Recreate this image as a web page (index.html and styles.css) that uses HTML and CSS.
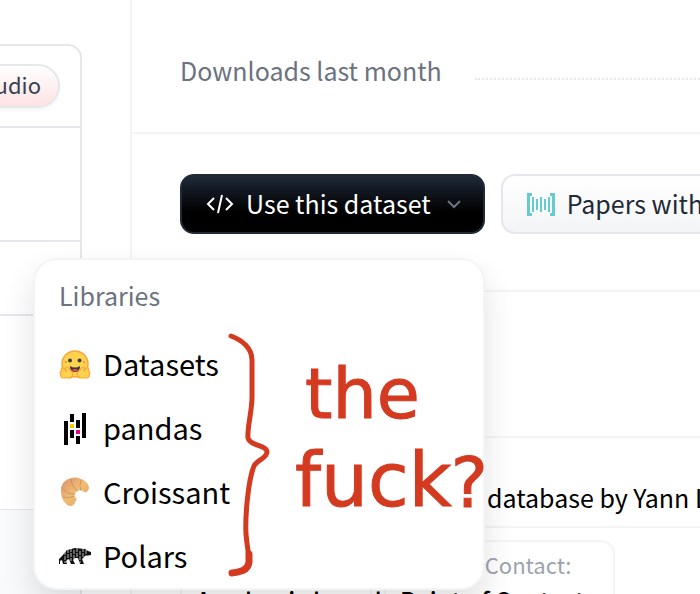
FILE: index.html
```html
<!DOCTYPE html>
<html lang="en">
<head>
<meta charset="utf-8">
<title>Dataset</title>
<link rel="stylesheet" href="styles.css">
</head>
<body>
<div class="page">
  <section class="viewer">
    <div class="viewer-card">
      <header class="viewer-head"><button class="pill" type="button">Studio</button></header>
      <div class="viewer-row tall"></div>
      <div class="viewer-row"></div>
      <div class="viewer-body"></div>
      <div class="viewer-foot"></div>
    </div>
  </section>
  <main class="side">
    <div class="downloads"><span>Downloads last month</span><i class="dots"></i></div>
    <div class="actions">
      <div class="dropdown">
        <button class="btn dark" type="button">
          <svg class="code" viewBox="0 0 28 20" width="28" height="20"><path d="M8 4 2 10l6 6M20 4l6 6-6 6M16 1l-4 18"/></svg>
          <span>Use this dataset</span>
          <svg class="chev" viewBox="0 0 14 10" width="14" height="10"><path d="m1 2 6 6 6-6"/></svg>
        </button>
        <div class="menu">
          <h2>Libraries</h2>
          <ul>
            <li><a href="#datasets">
              <svg viewBox="0 0 32 32" width="32" height="32">
                <circle cx="16" cy="15" r="13" fill="#ffd34d" stroke="#f8a63b" stroke-width="1.5"/>
                <circle cx="7" cy="13" r="1.2" fill="#f89a52"/><circle cx="25" cy="13" r="1.2" fill="#f89a52"/>
                <circle cx="11" cy="11.5" r="2" fill="#3a3b45"/><circle cx="20.5" cy="11.5" r="2" fill="#3a3b45"/>
                <path d="M11 17q5 3 10 0c0 4-2 6-5 6s-5-2-5-6z" fill="#3a3b45"/><path d="M13 21q3-2 6 0-3 3-6 0z" fill="#ef4e4e"/>
                <path d="M3 19c2-1 3 2 4 3 0-2-1-4 1-4s2 3 4 4c3 2 2 7-2 7H5c-3 0-4-2-3-4-2-2 0-3 1-3-1-1-1-2 0-3zM29 19c-2-1-3 2-4 3 0-2 1-4-1-4s-2 3-4 4c-3 2-2 7 2 7h5c3 0 4-2 3-4 2-2 0-3-1-3 1-1 1-2 0-3z" fill="#ffd34d" stroke="#f8a63b" stroke-width="1.2"/>
              </svg><span>Datasets</span></a></li>
            <li><a href="#pandas">
              <svg viewBox="0 0 32 32" width="32" height="32"><path d="M5 8h4v24H5zM11 1h4v8h-4zM11 17h4v8h-4zM17 7h4v8h-4zM17 23h4v8h-4zM23 0h4v25h-4z"/><path fill="#ffca00" d="M11 11h4v4h-4z"/><path fill="#e70488" d="M17 17h4v4h-4z"/></svg>
              <span>pandas</span></a></li>
            <li><a href="#croissant">
              <svg viewBox="0 0 32 32" width="32" height="32">
                <defs><linearGradient id="crust" x1="0" y1="0" x2="1" y2="1"><stop offset="0" stop-color="#dc9168"/><stop offset=".5" stop-color="#eebd74"/><stop offset="1" stop-color="#e3a05c"/></linearGradient></defs>
                <path fill="url(#crust)" d="M2 13C2 6 7 2 13 1c3-1 7 0 9 1 4 1 8 5 8 9-1 4-3 5-5 4-1-2-4-3-6-1-3 1-4 4-3 6 2 1 2 3 0 5 0 2-2 4-5 4-5-1-9-7-9-16z"/>
                <path fill="none" stroke="#c98459" stroke-width=".7" d="M12 2q0 6 6 12M22 3q-2 5 0 11M3 10q4 8 13 7M4 20q6 2 11-1"/>
              </svg><span>Croissant</span></a></li>
            <li><a href="#polars">
              <svg viewBox="0 0 32 32" width="32" height="32">
                <path fill="#111" d="M3 15 8 9l8-2 10 1 3 2 3 1v3l-6 1-3 3 2 5h-4l-2-6h-3l-2 2 2 4h-4l-2-5-3 2 1 3H4l-1-4-2 1v3H0v-5z"/>
                <path fill="none" stroke="#fff" stroke-width=".7" stroke-dasharray="4 1" d="M6 10v12M9 8v12M12 7v13M15 9v9M18 7v14M21 10v12M24 7v10M27 9v6"/>
              </svg><span>Polars</span></a></li>
          </ul>
          <svg class="brace" viewBox="0 0 42 246" width="42" height="246">
            <path d="M3 4C14 8 24 16 24 28V65C24 80 19 95 20 106c2 8 19 7 19 14 0 6-10 8-13 14-6 14-9 52-8 68 1 12 3 20 3 28"/>
            <path class="tail" d="M21 222v8c-1 9-10 10-17 11"/>
          </svg>
          <p class="note"><span>the</span><span class="wide">fuck</span></p>
          <b class="mark">?</b>
        </div>
      </div>
      <button class="btn light" type="button">
        <svg viewBox="0 0 28 24" width="28" height="24" fill="#64cbd0"><path d="M0 1h5v3H3v17h2v3H0zM28 1v23h-5v-3h2V4h-2V1zM5 5h2v15H5zM9 7h2v11H9zM13 5h2v15h-2zM17 7h2v11h-2zM21 5h2v15h-2z"/></svg>
        <span>Papers with Code</span>
      </button>
    </div>
    <div class="blank"></div>
    <div class="about">database by Yann LeCun</div>
    <div class="facts">
      <dl class="fact home"><dt>Homepage:</dt><dd>Academic based</dd></dl>
      <dl class="fact"><dt>Point of Contact:</dt><dd>Point of Contact</dd></dl>
    </div>
  </main>
</div>
</body>
</html>
```
FILE: styles.css
```css
* { box-sizing: border-box; }
html, body { height: 100%; }
body {
  margin: 0;
  overflow: hidden;
  background: #fff;
  color: #000;
  font: 25px/36px "Noto Sans CJK JP", "Noto Sans", sans-serif;
  white-space: nowrap;
}
button { font: inherit; margin: 0; }
.page { display: flex; height: 100%; }

.viewer { flex: none; display: flex; width: 130px; padding-top: 44px; }
.viewer-card {
  display: flex;
  flex-direction: column;
  width: 82px;
  border: 2px solid #e5e7eb;
  border-left: 0;
  border-bottom: 0;
  border-top-right-radius: 14px;
}
.viewer-head {
  display: flex;
  justify-content: flex-end;
  align-items: center;
  padding-right: 20px;
  height: 82px;
  border-bottom: 2px solid #e5e7eb;
}
.pill {
  flex: none;
  height: 44px;
  padding: 0 17px 4px;
  border: 2px solid #e5e7eb;
  border-radius: 22px;
  background: linear-gradient(#fff, #fee2e2);
  box-shadow: 0 2px 4px #0000000d;
  color: #374151;
  font-size: 22px;
  line-height: 36px;
}
.viewer-row { height: 74px; border-bottom: 2px solid #e5e7eb; }
.viewer-row.tall { height: 114px; }
.viewer-body { height: 194px; border-bottom: 1px solid #e5e7eb; }
.viewer-foot { flex: 1; background: #f9fafb; }

.side { flex: 1; min-width: 0; overflow: hidden; border-left: 2px solid #f3f4f6; }
.downloads {
  display: flex;
  align-items: flex-start;
  gap: 33px;
  height: 134px;
  padding: 52px 0 0 48px;
  border-bottom: 2px solid #f3f4f6;
  color: #6b7280;
}
.dots { flex: 1; height: 28px; border-bottom: 2px dotted #e5e7eb; }

.actions {
  display: flex;
  gap: 16px;
  height: 158px;
  padding: 40px 0 0 48px;
  border-bottom: 2px solid #f3f4f6;
}
.dropdown { flex: none; }
.btn {
  flex: none;
  display: flex;
  align-items: center;
  height: 60px;
  padding: 0 22px 0 24px;
  border: 2px solid #e5e7eb;
  border-radius: 14px;
}
.btn span { padding-bottom: 2px; }
.dark { gap: 12px; border-color: #1f2937; background: linear-gradient(#1f2937, #000 65%); color: #fff; }
.dark svg { fill: none; stroke: #fff; stroke-width: 2; }
.dark .chev { margin-left: 4px; stroke: #6b7280; }
.light { gap: 12px; background: linear-gradient(#fff, #f3f4f6); color: #1f2937; }

.menu {
  position: absolute;
  top: 258px;
  left: 33px;
  z-index: 2;
  width: 452px;
  height: 332px;
  padding: 17px 24px;
  border: 2px solid #f3f4f6;
  border-radius: 24px;
  background: #fff;
  box-shadow: 0 16px 32px #0000001f;
}
.menu h2 { margin: 0 0 18px; color: #6b7280; font-size: 25px; font-weight: 400; line-height: 36px; }
.menu ul { margin: 0; padding: 0; list-style: none; }
.menu a {
  display: flex;
  align-items: center;
  gap: 12px;
  height: 64px;
  color: #000;
  font-size: 29px;
  text-decoration: none;
}
.menu a svg { margin-top: 4px; }
.brace { position: absolute; top: 72px; left: 193px; fill: none; stroke: #d43a20; stroke-width: 5; stroke-linecap: round; stroke-linejoin: round; }
.brace .tail { stroke-width: 7; }
.note, .mark { position: absolute; margin: 0; color: #d43a20; font: 70px/86px "DejaVu Sans", sans-serif; -webkit-text-stroke: 1px #d43a20; }
.note { top: 91px; left: 260px; }
.note span { display: block; padding-left: 10px; }
.note .wide { padding-left: 0; font-size: 74px; }
.mark { top: 180px; right: -5px; }

.blank { height: 146px; border-bottom: 2px solid #f3f4f6; }
.about { height: 90px; padding: 41px 0 0 355px; border-bottom: 2px solid #f3f4f6; }
.facts { display: flex; gap: 12px; padding: 12px 0 0 48px; }
.fact {
  flex: none;
  width: 231px;
  height: 100px;
  margin: 0;
  padding: 4px 14px;
  border: 2px solid #f3f4f6;
  border-radius: 14px;
  color: #9ca3af;
  font-size: 22px;
}
.home { width: 192px; }
.fact dd { margin: 0; color: #000; font-size: 24px; font-weight: 500; }
```
